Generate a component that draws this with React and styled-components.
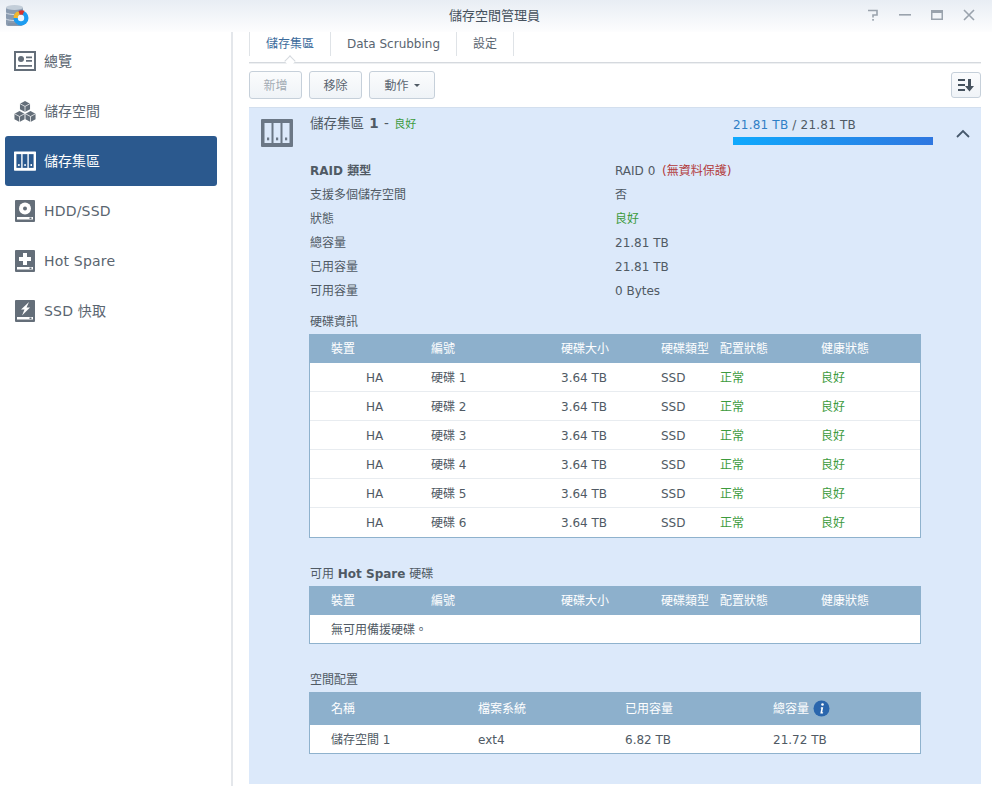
import React from 'react';
import styled, { createGlobalStyle } from 'styled-components';

const GlobalStyle = createGlobalStyle`
  html, body {
    margin: 0;
    padding: 0;
    background: #fff;
  }
  body {
    font-family: "DejaVu Sans", "Noto Sans CJK TC", sans-serif;
    font-size: 12px;
    color: #505a64;
  }
`;

const Window = styled.div`
  width: 992px;
  height: 786px;
  display: flex;
  flex-direction: column;
  overflow: hidden;
`;

const TitleBar = styled.div`
  height: 32px;
  flex: none;
  display: flex;
  align-items: center;
  justify-content: space-between;
  position: relative;
  padding: 0 16px 0 5px;
  background: linear-gradient(#e8edf4, #fdfdfe);
`;

const Title = styled.div`
  position: absolute;
  left: 0;
  right: 3px;
  top: 8px;
  text-align: center;
  font-size: 13px;
  line-height: 16px;
  color: #46525e;
`;

const WindowControls = styled.div`
  display: flex;
  align-items: center;
  gap: 18px;
  height: 32px;
  padding-bottom: 2px;
  box-sizing: border-box;
`;

const Body = styled.div`
  flex: 1;
  display: flex;
  min-height: 0;
`;

const Sidebar = styled.nav`
  width: 233px;
  flex: none;
  box-sizing: border-box;
  padding: 4px 14px 0 5px;
  border-right: 2px solid #e4e7eb;
`;

const NavItem = styled.div`
  height: 50px;
  display: flex;
  align-items: center;
  gap: 8px;
  padding-left: 9px;
  border-radius: 3px;
  font-size: 14px;
  line-height: 16px;
  letter-spacing: ${(p) => (p.$latin ? '0.2px' : '0')};
  color: ${(p) => (p.$active ? '#fff' : '#5a6570')};
  background: ${(p) => (p.$active ? '#2b598e' : 'transparent')};
`;

const NavIconBox = styled.span`
  width: 22px;
  height: 22px;
  flex: none;
  display: flex;
  align-items: center;
  justify-content: center;
`;

const Main = styled.main`
  flex: 1;
  min-width: 0;
  padding: 0 11px 2px 16px;
  display: flex;
  flex-direction: column;
`;

const Tabs = styled.div`
  height: 30px;
  flex: none;
  display: flex;
  border-bottom: 1px solid #d5d9de;
  box-shadow: 0 1px 0 #eef0f2;
`;

const Tab = styled.div`
  position: relative;
  height: 24px;
  line-height: 24px;
  box-sizing: border-box;
  border-right: 1px solid #dfe3e7;
  border-left: ${(p) => (p.$first ? '1px solid #dfe3e7' : 'none')};
  padding: 0 ${(p) => p.$pad}px;
  color: ${(p) => (p.$active ? '#3c6b9c' : '#5a6570')};

  ${(p) =>
    p.$active &&
    `
    &::after {
      content: "";
      position: absolute;
      left: 36px;
      top: 25px;
      width: 7px;
      height: 7px;
      background: #fff;
      border-left: 1px solid #d5d9de;
      border-top: 1px solid #d5d9de;
      transform: rotate(45deg);
    }
  `}
`;

const Toolbar = styled.div`
  flex: none;
  display: flex;
  align-items: center;
  gap: 7px;
  height: 28px;
  margin-top: 8px;
  margin-bottom: 8px;
`;

const ToolButton = styled.button`
  height: 28px;
  width: ${(p) => p.$w}px;
  box-sizing: border-box;
  padding: 1px 0 0;
  display: flex;
  align-items: center;
  justify-content: center;
  gap: 5px;
  border: 1px solid #c6d0da;
  border-radius: 3px;
  background: linear-gradient(#fbfcfd, #eff3f7);
  font: inherit;
  line-height: 16px;
  color: ${(p) => (p.disabled ? '#a3abb3' : '#5a6570')};
`;

const SortButton = styled(ToolButton)`
  height: 26px;
  margin-left: auto;
  padding: 0;
`;

const Caret = styled.span`
  width: 0;
  height: 0;
  border-left: 3px solid transparent;
  border-right: 3px solid transparent;
  border-top: 3px solid #505a64;
`;

const Panel = styled.section`
  flex: 1;
  background: #dce9fa;
  border-top: 1px solid #d3dfee;
  padding: 11px 60px 0 12px;
  display: flex;
  flex-direction: column;
  position: relative;
  box-sizing: border-box;
`;

const PanelHead = styled.div`
  height: 40px;
  flex: none;
  display: flex;
  align-items: flex-start;
`;

const PoolIconBox = styled.div`
  width: 49px;
  flex: none;
`;

const PoolName = styled.div`
  flex: 1;
  font-size: 13.5px;
  line-height: 16px;
  margin-top: -4px;
  word-spacing: 1px;
`;

const Bold = styled.b`
  font-weight: 700;
`;

const Good = styled.span`
  color: #3d9b3d;
`;

const PoolGood = styled(Good)`
  font-size: 11px;
`;

const Usage = styled.div`
  width: 200px;
  flex: none;
  margin-right: -12px;
`;

const UsageText = styled.div`
  line-height: 16px;
  margin-top: -2px;
  margin-bottom: 4px;
  letter-spacing: 0.2px;
  white-space: nowrap;
`;

const UsedText = styled.span`
  color: #2f7fc6;
`;

const Bar = styled.div`
  height: 8px;
  background: linear-gradient(90deg, #0fa9fd, #2f77e0);
`;

const Chevron = styled.div`
  position: absolute;
  right: 11px;
  top: 21px;
  line-height: 0;
`;

const Details = styled.div`
  margin-left: 49px;
  display: flex;
  flex-direction: column;
`;

const InfoRow = styled.div`
  height: 24px;
  line-height: 24px;
  display: grid;
  grid-template-columns: 305px 1fr;
  white-space: nowrap;
`;

const Red = styled.span`
  color: #b23a3a;
  margin-left: 3px;
`;

const SectionTitle = styled.div`
  line-height: 16px;
  margin-top: ${(p) => p.$top}px;
  margin-bottom: 4px;
`;

const TableBox = styled.div`
  margin-left: -1px;
  width: 612px;
  box-sizing: border-box;
  border: 1px solid #8fb2cd;
  border-top: none;
  background: #fff;
`;

const Row = styled.div`
  display: grid;
  grid-template-columns: ${(p) => p.$cols};
  align-items: center;
  box-sizing: border-box;
  height: ${(p) => p.$h}px;
  line-height: 16px;
  padding-top: ${(p) => (p.$head ? 0 : 1)}px;
  padding-left: ${(p) => (p.$head ? 22 : 21)}px;
  margin: ${(p) => (p.$head ? '0 -1px' : '0')};
  background: ${(p) => (p.$head ? '#8db0cc' : 'transparent')};
  color: ${(p) => (p.$head ? '#fff' : '#505a64')};
  border-bottom: ${(p) => (p.$line ? '1px solid #e8ecf0' : 'none')};
  white-space: nowrap;
`;

const DeviceCell = styled.span`
  padding-left: 35px;
`;

const StatusCell = styled.span`
  color: #3d9b3d;
`;

const HeadWithInfo = styled.span`
  display: flex;
  align-items: center;
  gap: 4px;
`;

const Sw = ({ w, h, children, vb }) => (
  <svg width={w} height={h} viewBox={vb || `0 0 ${w} ${h}`} style={{ display: 'block' }}>
    {children}
  </svg>
);

const AppIcon = () => (
  <Sw w={24} h={24}>
    <rect x="1" y="3" width="17" height="19" rx="2" fill="#8a9bb0" />
    <ellipse cx="9.500" cy="3.500" rx="8.500" ry="2.500" fill="#c3ced9" />
    <path d="M1 9c3 2 14 2 17 0M1 15c3 2 14 2 17 0" fill="none" stroke="#d5dde6" strokeWidth="1" />
    <circle cx="16" cy="14" r="7.500" fill="#1d9cf0" />
    <path d="M8.500 14a7.500 7.500 0 0 1 5-7l1.500 4a3 3 0 0 0-2 3z" fill="#f3b72f" />
    <path d="M13.500 7a7.500 7.500 0 0 1 6-.2L17.500 11a3 3 0 0 0-2.500 0z" fill="#d9342b" />
    <circle cx="16" cy="14" r="3.200" fill="#eef6fd" />
    <path d="M3 20h9" stroke="#7a8899" strokeWidth="0.800" />
  </Sw>
);

const OverviewIcon = ({ c }) => (
  <Sw w={22} h={20}>
    <path fillRule="evenodd" fill={c} d="M0 0h22v20H0zM2 2v16h18V2z" />
    <circle cx="7" cy="8" r="3" fill={c} />
    <path d="M4 14h14v1.800H4zM12 5.500h6v1.800h-6zM12 9h6v1.800h-6z" fill={c} />
  </Sw>
);

const CubesIcon = ({ c }) => (
  <Sw w={24} h={24}>
    <path d="M12 1l5.500 3v6L12 13 6.500 10V4z" fill={c} />
    <path d="M6 12l5.500 3v6L6 24 .5 21v-6z" fill={c} />
    <path d="M18 12l5.500 3v6L18 24l-5.500-3v-6z" fill={c} />
    <path d="M6.500 4L12 7l5.500-3M12 7v6M.5 15L6 18l5.500-3M6 18v6M12.500 15l5.500 3 5.500-3M18 18v6" stroke="#fff" strokeWidth=".8" fill="none" />
  </Sw>
);

const PoolIcon = ({ c, inner, w = 22, h = 20 }) => (
  <svg width={w} height={h} viewBox="0 0 32 28" style={{ display: 'block' }}>
    <rect width="32" height="28" rx="1" fill={c} />
    <rect x="3.500" y="4" width="7" height="20" fill={inner} />
    <rect x="12.500" y="4" width="7" height="20" fill={inner} />
    <rect x="21.500" y="4" width="7" height="20" fill={inner} />
    <rect x="6" y="18.500" width="2.200" height="2.800" fill={c} />
    <rect x="15" y="18.500" width="2.200" height="2.800" fill={c} />
    <rect x="24" y="18.500" width="2.200" height="2.800" fill={c} />
  </svg>
);

const DiskBase = ({ c, children }) => (
  <Sw w={20} h={22}>
    <rect width="20" height="22" rx="1" fill={c} />
    <rect x="2" y="17" width="16" height="2.500" fill="#fff" />
    <rect x="14.500" y="17.500" width="2" height="1.500" fill={c} />
    {children}
  </Sw>
);

const DiskIcon = ({ c }) => (
  <DiskBase c={c}>
    <circle cx="10" cy="8.500" r="6" fill="#fff" />
    <circle cx="10" cy="8.500" r="2" fill={c} />
  </DiskBase>
);

const SpareIcon = ({ c }) => (
  <DiskBase c={c}>
    <path d="M8 3h4v4h4v4h-4v4H8v-4H4V7h4z" fill="#fff" />
  </DiskBase>
);

const CacheIcon = ({ c }) => (
  <DiskBase c={c}>
    <path d="M14 2L6 9.500h3.500L7 15.500 15 7.500h-3.500z" fill="#fff" />
  </DiskBase>
);

const InfoIcon = () => (
  <Sw w={17} h={17}>
    <circle cx="8.500" cy="8.500" r="8" fill="#2a66ad" />
    <circle cx="9.500" cy="4.500" r="1.300" fill="#fff" />
    <path d="M8 7.200h2.200l-1 5h1l-.3 1.200H7.300l1-5H7.700z" fill="#fff" />
  </Sw>
);

const navItems = [
  { label: '總覽', Icon: OverviewIcon },
  { label: '儲存空間', Icon: CubesIcon },
  { label: '儲存集區', Icon: PoolIcon, active: true },
  { label: 'HDD/SSD', Icon: DiskIcon, latin: true },
  { label: 'Hot Spare', Icon: SpareIcon, latin: true },
  { label: 'SSD 快取', Icon: CacheIcon, latin: true },
];

const info = [
  [<Bold key="r">RAID 類型</Bold>, <span key="v">RAID 0<Red> (無資料保護)</Red></span>],
  ['支援多個儲存空間', '否'],
  ['狀態', <Good key="g">良好</Good>],
  ['總容量', '21.81 TB'],
  ['已用容量', '21.81 TB'],
  ['可用容量', '0 Bytes'],
];

const diskCols = '100px 130px 100px 59px 101px 1fr';
const volumeCols = '147px 147px 148px 1fr';
const diskHead = ['裝置', '編號', '硬碟大小', '硬碟類型', '配置狀態', '健康狀態'];
const disks = [1, 2, 3, 4, 5, 6];

const DiskHeader = () => (
  <Row $head $cols={diskCols} $h={29}>
    {diskHead.map((h) => (
      <span key={h}>{h}</span>
    ))}
  </Row>
);

export default function App() {
  return (
    <Window>
      <GlobalStyle />
      <TitleBar>
        <AppIcon />
        <Title>儲存空間管理員</Title>
        <WindowControls>
          <Sw w={14} h={14}>
            <path d="M2 2.500h9v4.500H7v2.500" fill="none" stroke="#9aa3ad" strokeWidth="1.600" />
            <rect x="6.200" y="11" width="1.700" height="1.700" fill="#9aa3ad" />
          </Sw>
          <Sw w={14} h={14}>
            <rect x="1" y="6" width="12" height="1.600" fill="#9aa3ad" />
          </Sw>
          <Sw w={14} h={14}>
            <path fillRule="evenodd" d="M1 2h12v10H1zM2.500 5v5.500h9V5z" fill="#9aa3ad" />
          </Sw>
          <Sw w={14} h={14}>
            <path d="M2 2l10 10M12 2L2 12" stroke="#9aa3ad" strokeWidth="1.600" />
          </Sw>
        </WindowControls>
      </TitleBar>
      <Body>
        <Sidebar>
          {navItems.map(({ label, Icon, active, latin }) => (
            <NavItem key={label} $active={active} $latin={latin}>
              <NavIconBox>
                <Icon c={active ? '#fff' : '#646e79'} inner="#2b598e" />
              </NavIconBox>
              {label}
            </NavItem>
          ))}
        </Sidebar>
        <Main>
          <Tabs>
            <Tab $first $active $pad={16}>儲存集區</Tab>
            <Tab $pad={16}>Data Scrubbing</Tab>
            <Tab $pad={16}>設定</Tab>
          </Tabs>
          <Toolbar>
            <ToolButton $w={53} disabled>新增</ToolButton>
            <ToolButton $w={53}>移除</ToolButton>
            <ToolButton $w={66}>動作 <Caret /></ToolButton>
            <SortButton $w={30}>
              <Sw w={18} h={14}>
                <path d="M1 1h7v2H1zM1 6h7v2H1zM1 11h7v2H1z" fill="#46525e" />
                <path d="M11 1h3v7h3l-4.500 5.500L8 8h3z" fill="#46525e" />
              </Sw>
            </SortButton>
          </Toolbar>
          <Panel>
            <PanelHead>
              <PoolIconBox>
                <PoolIcon c="#6b7785" inner="#dce9fa" w={32} h={28} />
              </PoolIconBox>
              <PoolName>
                儲存集區 <Bold>1</Bold> - <PoolGood>良好</PoolGood>
              </PoolName>
              <Usage>
                <UsageText>
                  <UsedText>21.81 TB</UsedText> / 21.81 TB
                </UsageText>
                <Bar />
              </Usage>
            </PanelHead>
            <Chevron>
              <Sw w={14} h={9}>
                <path d="M1 8l6-6 6 6" fill="none" stroke="#46586c" strokeWidth="1.800" />
              </Sw>
            </Chevron>
            <Details>
              {info.map(([label, value], i) => (
                <InfoRow key={i}>
                  <span>{label}</span>
                  <span>{value}</span>
                </InfoRow>
              ))}
              <SectionTitle $top={11}>硬碟資訊</SectionTitle>
              <TableBox>
                <DiskHeader />
                {disks.map((n) => (
                  <Row key={n} $cols={diskCols} $h={29} $line={n < 6}>
                    <DeviceCell>HA</DeviceCell>
                    <span>硬碟 {n}</span>
                    <span>3.64 TB</span>
                    <span>SSD</span>
                    <StatusCell>正常</StatusCell>
                    <StatusCell>良好</StatusCell>
                  </Row>
                ))}
              </TableBox>
              <SectionTitle $top={28}>可用 <Bold>Hot Spare</Bold> 硬碟</SectionTitle>
              <TableBox>
                <DiskHeader />
                <Row $cols="1fr" $h={28}>
                  <span>無可用備援硬碟。</span>
                </Row>
              </TableBox>
              <SectionTitle $top={28}>空間配置</SectionTitle>
              <TableBox>
                <Row $head $cols={volumeCols} $h={33}>
                  <span>名稱</span>
                  <span>檔案系統</span>
                  <span>已用容量</span>
                  <HeadWithInfo>總容量 <InfoIcon /></HeadWithInfo>
                </Row>
                <Row $cols={volumeCols} $h={28}>
                  <span>儲存空間 1</span>
                  <span>ext4</span>
                  <span>6.82 TB</span>
                  <span>21.72 TB</span>
                </Row>
              </TableBox>
            </Details>
          </Panel>
        </Main>
      </Body>
    </Window>
  );
}
